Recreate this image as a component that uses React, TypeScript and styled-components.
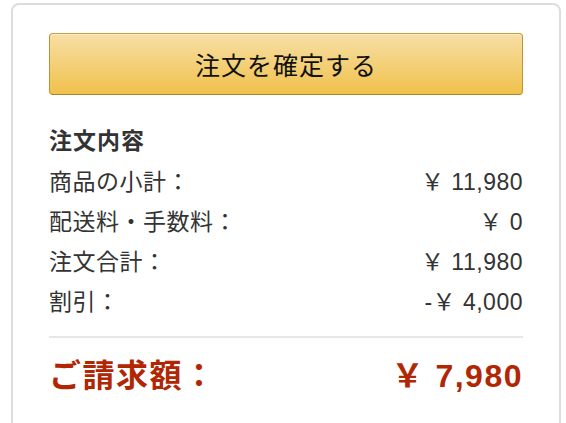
import React from 'react'
import styled, { createGlobalStyle } from 'styled-components'

const GlobalStyle = createGlobalStyle`
  html, body {
    margin: 0;
    padding: 0;
    background: #fff;
    overflow: hidden;
    font-family: "Liberation Sans", "Noto Sans CJK JP", sans-serif;
  }
`

const rows = [
  { label: '商品の小計：', value: '￥ 11,980' },
  { label: '配送料・手数料：', value: '￥ 0' },
  { label: '注文合計：', value: '￥ 11,980' },
  { label: '割引：', value: '-￥ 4,000' },
]

const App = () => {
  return (
    <>
      <GlobalStyle />
      <Page>
        <Card>
          <PlaceButton type="button">注文を確定する</PlaceButton>
          <Heading>注文内容</Heading>
          {rows.map((r) => (
            <Row key={r.label}>
              <span>{r.label}</span>
              <span>{r.value}</span>
            </Row>
          ))}
          <Divider />
          <Total>
            <span>ご請求額：</span>
            <span>￥ 7,980</span>
          </Total>
        </Card>
      </Page>
    </>
  )
}

export default App

const Page = styled.div`
  padding: 3px 5px 0 11px;
  height: 423px;
  box-sizing: border-box;
  overflow: hidden;
`

const Card = styled.div`
  border: 2px solid #dddddd;
  border-radius: 8px;
  padding: 28px 36px 0 36px;
  min-height: 460px;
  box-sizing: border-box;
  display: flex;
  flex-direction: column;
`

const PlaceButton = styled.button`
  height: 62px;
  width: 100%;
  border: 1px solid;
  border-color: #c99d3c #bf9332 #a9852c;
  border-radius: 4px;
  background: linear-gradient(to bottom, #f7dfa5, #f0c14b);
  box-shadow: inset 0 1px 0 rgba(255, 255, 255, 0.5);
  color: #111;
  font-family: "Liberation Sans", "Noto Sans CJK JP", sans-serif;
  font-size: 25px;
  letter-spacing: 1px;
  cursor: pointer;
  padding: 0;
`

const Heading = styled.h3`
  margin: 26px 0 0;
  font-size: 23px;
  line-height: 40px;
  font-weight: 700;
  color: #333;
  letter-spacing: 1px;
`

const Row = styled.div`
  display: flex;
  justify-content: space-between;
  align-items: center;
  font-size: 23px;
  line-height: 40px;
  color: #333;
  letter-spacing: 0.5px;
  padding-top: 1px;
  margin-bottom: -1px;
`

const Divider = styled.hr`
  margin: 15px 0 0;
  border: none;
  height: 2px;
  background: #e7e7e7;
`

const Total = styled.div`
  margin-top: 14px;
  display: flex;
  justify-content: space-between;
  align-items: center;
  font-size: 32px;
  line-height: 48px;
  font-weight: 700;
  color: #b12704;
  letter-spacing: 1.5px;
`
